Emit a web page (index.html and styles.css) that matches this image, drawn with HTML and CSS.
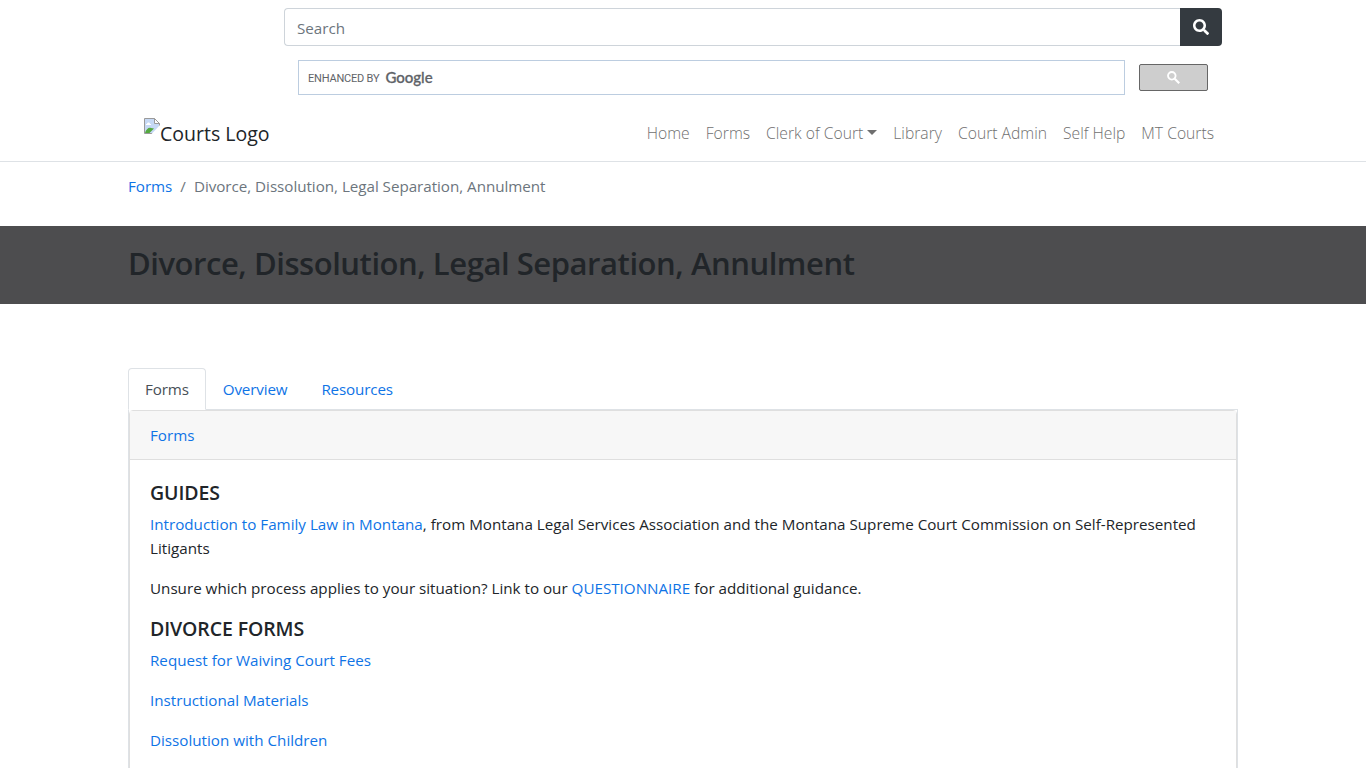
FILE: index.html
```html
<!DOCTYPE html>
<html lang="en">
<head>
  <meta charset="UTF-8">
  <title>Divorce, Dissolution, Legal Separation, Annulment</title>
  <link rel="stylesheet" href="styles.css">
</head>
<body>
  <header class="site-header">
    <div class="container">
      <div class="search-area">
        <form class="input-group">
          <input type="text" class="form-control" placeholder="Search">
          <button type="button" class="btn-dark" aria-label="Search">
            <svg width="16" height="16" viewBox="0 0 512 512"><path fill="#fff" d="M505 442.700L405.300 343c-4.500-4.500-10.600-7-17-7H372c27.600-35.300 44-79.700 44-128C416 93.100 322.900 0 208 0S0 93.100 0 208s93.100 208 208 208c48.300 0 92.700-16.400 128-44v16.300c0 6.400 2.500 12.500 7 17l99.700 99.700c9.400 9.400 24.600 9.400 33.900 0l28.300-28.300c9.400-9.400 9.400-24.600.1-34zM208 336c-70.700 0-128-57.200-128-128 0-70.700 57.200-128 128-128 70.700 0 128 57.200 128 128 0 70.700-57.200 128-128 128z"/></svg>
          </button>
        </form>
        <div class="cse">
          <div class="cse-input"><span class="enhanced">ENHANCED BY</span><span class="google">Google</span></div>
          <button type="button" class="cse-button" aria-label="search">
            <svg width="13" height="13" viewBox="0 0 13 13" fill="none" stroke="#fff"><circle cx="4.800" cy="4.800" r="3.800" stroke-width="1.800"/><path stroke-width="2.200" d="M7.700 7.700l4.500 4.500"/></svg>
          </button>
        </div>
      </div>
      <nav class="navbar">
        <a class="navbar-brand" href="#">
          <svg width="16" height="16" viewBox="0 0 16 16">
            <path fill="#c6d9f5" stroke="#9a9a9a" d="M.5.500h10l5 5v4l-6 6h-9z"/>
            <path fill="#fff" stroke="#9a9a9a" d="M10.500.500v5h5z"/>
            <path fill="#fff" d="M3 6c0-2 3-2 3 0h1v1H2V6z"/>
            <path fill="#54a93f" d="M1 15c1-4 4-6 6-5l3 .5L5.500 15z"/>
            <path fill="#fff" d="M16 7L7.500 16H16z"/>
          </svg><span>Courts Logo</span>
        </a>
        <ul class="navbar-nav">
          <li><a href="#">Home</a></li>
          <li><a href="#">Forms</a></li>
          <li><a class="dropdown-toggle" href="#">Clerk of Court</a></li>
          <li><a href="#">Library</a></li>
          <li><a href="#">Court Admin</a></li>
          <li><a href="#">Self Help</a></li>
          <li><a href="#">MT Courts</a></li>
        </ul>
      </nav>
    </div>
  </header>

  <ol class="breadcrumb container">
    <li><a href="#">Forms</a></li>
    <li class="active">Divorce, Dissolution, Legal Separation, Annulment</li>
  </ol>

  <div class="banner">
    <div class="container">
      <h2>Divorce, Dissolution, Legal Separation, Annulment</h2>
    </div>
  </div>

  <main class="container">
    <ul class="nav-tabs">
      <li><a class="nav-link active" href="#">Forms</a></li>
      <li><a class="nav-link" href="#">Overview</a></li>
      <li><a class="nav-link" href="#">Resources</a></li>
    </ul>
    <div class="tab-content">
      <div class="card">
        <div class="card-header"><a href="#">Forms</a></div>
        <div class="card-body">
          <h5>GUIDES</h5>
          <p><a href="#">Introduction to Family Law in Montana</a>, from Montana Legal Services Association and the Montana Supreme Court Commission on Self-Represented Litigants</p>
          <p>Unsure which process applies to your situation? Link to our <a href="#">QUESTIONNAIRE</a> for additional guidance.</p>
          <h5>DIVORCE FORMS</h5>
          <p><a href="#">Request for Waiving Court Fees</a></p>
          <p><a href="#">Instructional Materials</a></p>
          <p><a href="#">Dissolution with Children</a></p>
        </div>
      </div>
    </div>
  </main>
</body>
</html>
```
FILE: styles.css
```css
* {
  box-sizing: border-box;
}

body {
  margin: 0;
  height: 100vh;
  overflow: hidden;
  background: #fff;
  color: #212529;
  font-family: "Segoe UI", "Open Sans", "Noto Sans", sans-serif;
  font-size: 15.2px;
  line-height: 24px;
}

a {
  color: #0f74e6;
  text-decoration: none;
}

ul, ol {
  list-style: none;
  margin: 0;
  padding: 0;
}

.container {
  width: 1110px;
  margin: 0 auto;
}

.site-header {
  height: 162px;
  padding-top: 8px;
  border-bottom: 1px solid #dee2e6;
}

.search-area {
  margin: 0 16px 0 156px;
}

.input-group {
  display: flex;
  height: 38px;
}

.form-control {
  flex: 1;
  padding: 6px 12px 4px;
  border: 1px solid #ced4da;
  border-right: 0;
  border-radius: 4px 0 0 4px;
  font: inherit;
}

.form-control::placeholder {
  color: #6c757d;
}

.btn-dark {
  display: flex;
  align-items: center;
  justify-content: center;
  width: 42px;
  padding: 0;
  border: 0;
  border-radius: 0 4px 4px 0;
  background: #343a40;
}

.cse {
  display: flex;
  align-items: center;
  gap: 14px;
  padding: 14px 14px 0;
}

.cse-input {
  flex: 1;
  display: flex;
  align-items: center;
  gap: 6px;
  height: 35px;
  padding-left: 9px;
  border: 1px solid #bccde0;
  color: #5f6368;
}

.enhanced {
  padding-top: 1px;
  font: 11px Roboto, sans-serif;
  letter-spacing: -0.2px;
}

.google {
  padding-bottom: 2px;
  font: 500 15px Lato, sans-serif;
  -webkit-text-stroke: 0.3px #5f6368;
}

.cse-button {
  display: flex;
  align-items: center;
  justify-content: center;
  width: 69px;
  height: 27px;
  padding: 0;
  border: 1px solid #666;
  border-radius: 2px;
  background: #cecece;
}

.navbar {
  display: flex;
  align-items: center;
  justify-content: space-between;
  height: 62px;
  padding: 14px 16px 0;
}

.navbar-brand {
  display: flex;
  color: #212529;
  font-size: 19.500px;
  line-height: 30px;
}

.navbar-brand span {
  padding-top: 1px;
  margin-bottom: -1px;
}

.navbar-nav {
  display: flex;
  font-size: 15.700px;
  font-weight: 300;
}

.navbar-nav a {
  display: block;
  padding: 0 8px;
  color: #6f6f6f;
}

.dropdown-toggle::after {
  content: "";
  display: inline-block;
  margin-left: 4px;
  vertical-align: 4px;
  border-top: 5px solid;
  border-right: 5px solid transparent;
  border-left: 5px solid transparent;
}

.breadcrumb {
  display: flex;
  height: 64px;
  padding-top: 12px;
  letter-spacing: -0.03px;
}

.breadcrumb .active {
  color: #6c757d;
}

.breadcrumb .active::before {
  content: "/";
  padding: 0 8px;
}

.banner {
  height: 78px;
  padding-top: 18px;
  background: #4d4d4f;
}

h2 {
  margin: 0;
  font-size: 31px;
  font-weight: 600;
  line-height: 38px;
  letter-spacing: -0.45px;
}

main {
  padding-top: 64px;
}

.nav-tabs {
  display: flex;
  height: 42px;
  border-bottom: 1px solid #dee2e6;
  letter-spacing: -0.15px;
}

.nav-link {
  display: block;
  height: 42px;
  padding: 8px 16px;
  border: 1px solid transparent;
  border-radius: 4px 4px 0 0;
}

.nav-link.active {
  color: #495057;
  background: #fff;
  border-color: #dee2e6 #dee2e6 #fff;
}

.tab-content {
  border: 1px solid #dee2e6;
  border-top: 0;
}

.card {
  border: 1px solid #dfdfdf;
  border-radius: 4px;
}

.card-header {
  height: 49px;
  padding: 12px 20px;
  background: #f7f7f7;
  border-bottom: 1px solid #dfdfdf;
}

.card-body {
  padding: 20px;
}

h5 {
  margin: 0 0 7px;
  padding-top: 1px;
  font-size: 19.500px;
  font-weight: 600;
  line-height: 24px;
  letter-spacing: -0.1px;
}

p {
  margin: 0 0 16px;
}
```
